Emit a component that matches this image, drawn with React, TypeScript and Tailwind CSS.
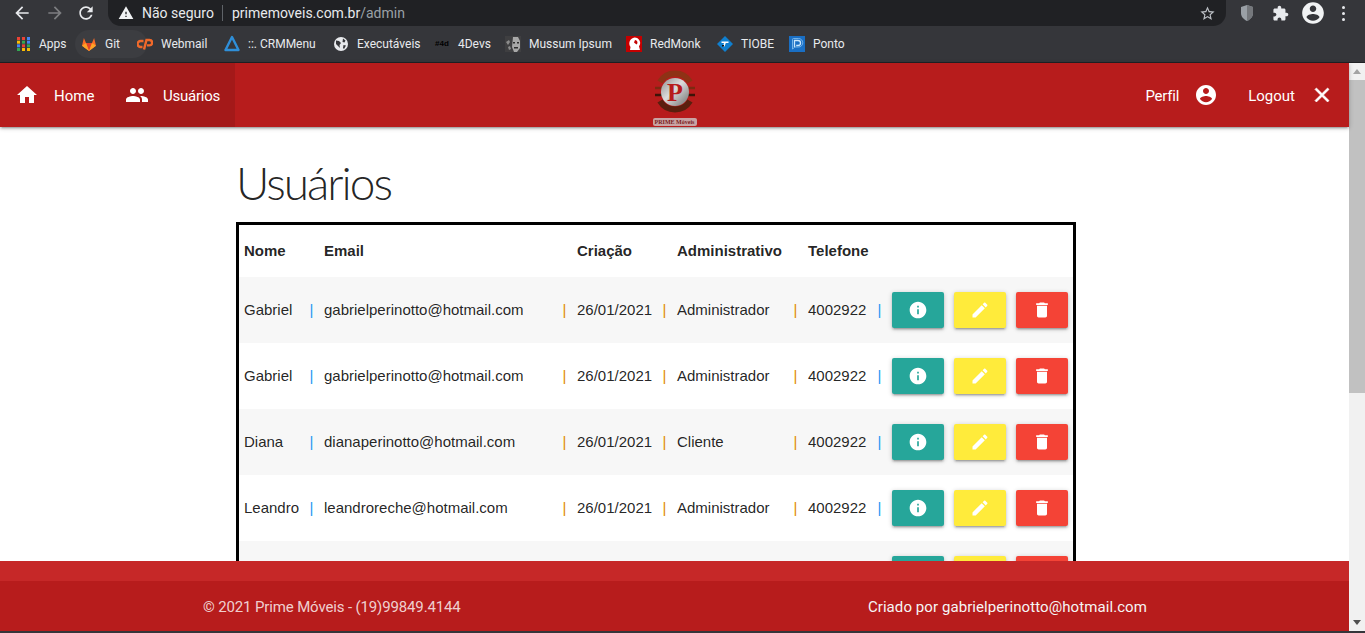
import { ReactNode } from "react";

const users = [
  { name: "Gabriel", email: "gabrielperinotto@hotmail.com", role: "Administrador" },
  { name: "Gabriel", email: "gabrielperinotto@hotmail.com", role: "Administrador" },
  { name: "Diana", email: "dianaperinotto@hotmail.com", role: "Cliente" },
  { name: "Leandro", email: "leandroreche@hotmail.com", role: "Administrador" },
];

function Mi({ d, size = 24, className = "" }: { d: string; size?: number; className?: string }) {
  return (
    <svg width={size} height={size} viewBox="0 0 24 24" fill="currentColor" className={className}>
      <path d={d} />
    </svg>
  );
}

const icons = {
  home: "M10 20v-6h4v6h5v-8h3L12 3 2 12h3v8z",
  people:
    "M16 11c1.66 0 2.99-1.34 2.99-3S17.66 5 16 5c-1.66 0-3 1.34-3 3s1.34 3 3 3zm-8 0c1.66 0 2.99-1.34 2.99-3S9.66 5 8 5C6.34 5 5 6.34 5 8s1.34 3 3 3zm0 2c-2.33 0-7 1.17-7 3.5V19h14v-2.5c0-2.33-4.67-3.5-7-3.5zm8 0c-.29 0-.62.02-.97.05 1.16.84 1.97 1.97 1.97 3.45V19h6v-2.5c0-2.33-4.67-3.5-7-3.5z",
  account:
    "M12 2C6.48 2 2 6.48 2 12s4.48 10 10 10 10-4.48 10-10S17.52 2 12 2zm0 3c1.66 0 3 1.34 3 3s-1.34 3-3 3-3-1.34-3-3 1.34-3 3-3zm0 14.2c-2.5 0-4.71-1.28-6-3.22.03-1.99 4-3.08 6-3.08 1.99 0 5.97 1.09 6 3.08-1.29 1.94-3.5 3.22-6 3.22z",
  close: "M19 6.41L17.59 5 12 10.59 6.41 5 5 6.41 10.59 12 5 17.59 6.41 19 12 13.41 17.59 19 19 17.59 13.41 12z",
  info: "M12 2C6.48 2 2 6.48 2 12s4.48 10 10 10 10-4.48 10-10S17.52 2 12 2zm1 15h-2v-6h2v6zm0-8h-2V7h2v2z",
  edit: "M3 17.25V21h3.75L17.81 9.94l-3.75-3.75L3 17.25zM20.71 7.04c.39-.39.39-1.02 0-1.41l-2.34-2.34c-.39-.39-1.02-.39-1.41 0l-1.83 1.83 3.75 3.75 1.83-1.83z",
  trash: "M6 19c0 1.1.9 2 2 2h8c1.1 0 2-.9 2-2V7H6v12zM19 4h-3.5l-1-1h-5l-1 1H5v2h14V4z",
  puzzle:
    "M20.5 11H19V7c0-1.1-.9-2-2-2h-4V3.5C13 2.12 11.88 1 10.5 1S8 2.12 8 3.5V5H4c-1.1 0-1.99.9-1.99 2v3.8H3.5c1.49 0 2.7 1.21 2.7 2.7s-1.21 2.7-2.7 2.7H2V20c0 1.1.9 2 2 2h3.8v-1.5c0-1.49 1.21-2.7 2.7-2.7 1.49 0 2.7 1.21 2.7 2.7V22H17c1.1 0 2-.9 2-2v-4h1.5c1.38 0 2.5-1.12 2.5-2.5S21.88 11 20.5 11z",
  back: "M20 11H7.83l5.59-5.59L12 4l-8 8 8 8 1.41-1.41L7.83 13H20v-2z",
  forward: "M12 4l-1.41 1.41L16.17 11H4v2h12.17l-5.58 5.59L12 20l8-8z",
  reload:
    "M17.65 6.35C16.2 4.9 14.21 4 12 4c-4.42 0-7.99 3.58-7.99 8s3.57 8 7.99 8c3.73 0 6.84-2.55 7.73-6h-2.08c-.82 2.33-3.04 4-5.65 4-3.31 0-6-2.69-6-6s2.69-6 6-6c1.66 0 3.14.69 4.22 1.78L13 11h7V4l-2.35 2.35z",
  warning: "M1 21h22L12 2 1 21zm12-3h-2v-2h2v2zm0-4h-2v-4h2v4z",
  star: "M22 9.24l-7.19-.62L12 2 9.19 8.63 2 9.24l5.46 4.73L5.82 21 12 17.27 18.18 21l-1.63-7.03L22 9.24zM12 15.4l-3.76 2.27 1-4.28-3.32-2.88 4.38-.38L12 6.1l1.71 4.04 4.38.38-3.32 2.88 1 4.28L12 15.4z",
};

function AppsIcon() {
  const colors = ["#ea4335", "#ea4335", "#4285f4", "#fbbc05", "#34a853", "#4285f4", "#4285f4", "#ea4335", "#34a853", "#34a853", "#fbbc05", "#fbbc05"];
  return (
    <svg width="13" height="14" viewBox="0 0 13 14">
      {colors.map((c, i) => (
        <rect key={i} x={(i % 3) * 5} y={Math.floor(i / 3) * 3.67} width="3" height="3" fill={c} />
      ))}
    </svg>
  );
}

const bookmarks: { label: string; w: string; hover?: boolean; icon: ReactNode }[] = [
  { label: "Apps", w: "w-[66px]", icon: <AppsIcon /> },
  {
    label: "Git",
    w: "w-[56px]",
    hover: true,
    icon: (
      <svg width="16" height="16" viewBox="0 0 16 16">
        <path d="M8 15L1 9.8 2.9 2 5 7h6l2.1-5L15 9.8z" fill="#fc6d26" />
        <path d="M8 15L5 7h6z" fill="#e24329" />
        <path d="M8 15L1 9.8 5 7zM8 15l7-5.2L11 7z" fill="#fca326" />
      </svg>
    ),
  },
  {
    label: "Webmail",
    w: "w-[87px]",
    icon: (
      <svg width="16" height="16" viewBox="0 0 16 16" fill="none" stroke="#f0692a" strokeWidth="2.4">
        <path d="M6.5 5H3.6a3 3 0 0 0 0 6H5.5" />
        <path d="M7 13.5L9.5 4H12.4a2.6 2.6 0 0 1 0 5.4H10" />
      </svg>
    ),
  },
  {
    label: "::. CRMMenu",
    w: "w-[109px]",
    icon: (
      <svg width="16" height="18" viewBox="0 0 16 18" fill="none">
        <path d="M8 2L14.5 15H1.500z" stroke="#2f8fd8" strokeWidth="2.4" strokeLinejoin="round" />
      </svg>
    ),
  },
  {
    label: "Executáveis",
    w: "w-[101px]",
    icon: (
      <svg width="16" height="16" viewBox="0 0 16 16">
        <circle cx="8" cy="8" r="7" fill="#e8eaed" />
        <path d="M3 4.5l3 .5 2 2-1.5 2 .5 3L5 10 3 8zM10 2.500l2.500 2-1 2-2-.5zM10.500 9l2.500.5-2 3.500-1-1z" fill="#35363a" />
      </svg>
    ),
  },
  {
    label: "4Devs",
    w: "w-[71px]",
    icon: <span className="w-4 text-[8px] font-bold text-black text-center font-['Liberation_Sans',sans-serif]">#4d</span>,
  },
  {
    label: "Mussum Ipsum",
    w: "w-[121px]",
    icon: (
      <svg width="16" height="16" viewBox="0 0 16 16">
        <rect width="16" height="16" fill="#3f3f41" />
        <path d="M8 1h5l2 4v7l-3 4H9l-2-5z" fill="#a8a8a8" />
        <path d="M1 6l3-2 1 2-2 3zM3 11l2-1 1 3-2 1z" fill="#8c8c8c" />
        <path d="M8 6h2v1.500H8zM12 6h2v1.500h-2zM9 11h4v1.500H9z" fill="#2e2e2e" />
      </svg>
    ),
  },
  {
    label: "RedMonk",
    w: "w-[91px]",
    icon: (
      <svg width="16" height="16" viewBox="0 0 16 16">
        <rect width="16" height="16" fill="#c40000" />
        <path d="M8.500 1.500a5.500 5.500 0 0 1 4.500 8.800L14 14H4l.5-3a6 6 0 0 1 4-9.500z" fill="#fff" />
        <path d="M9 4a2.500 2.500 0 0 1 1.500 4.500L8 6.500z" fill="#c40000" />
      </svg>
    ),
  },
  {
    label: "TIOBE",
    w: "w-[72px]",
    icon: (
      <svg width="16" height="16" viewBox="0 0 16 16">
        <path d="M8 0l8 8-8 8-8-8z" fill="#0f7fcf" />
        <path d="M4.500 5.500h7v1.400H8.800L7.500 10.500H6l1-3.600H4.500z" fill="#fff" />
        <path d="M5 9h2v1.400H5z" fill="#111" />
      </svg>
    ),
  },
  {
    label: "Ponto",
    w: "w-[70px]",
    icon: (
      <svg width="16" height="16" viewBox="0 0 16 16" fill="none">
        <rect width="16" height="16" fill="#1a6fc4" />
        <path d="M5.500 11V4.500h3.500a2.500 2.500 0 0 1 0 5H7.200" stroke="#cbe6fb" strokeWidth="1.300" />
        <path d="M3.500 13V3.500a1 1 0 0 1 1-1h5a4 4 0 0 1 0 8.500H6z" stroke="#8cc4f0" strokeWidth=".8" />
      </svg>
    ),
  },
];

function ChromeBars() {
  return (
    <div className="bg-[#35363a] text-[#e8eaed] font-['Roboto',sans-serif] border-b border-[#202124]">
      <div className="h-[26px] flex items-center">
        <div className="w-[108px] flex items-center text-[#e8eaed]">
          <Mi d={icons.back} size={20} className="ml-[12px]" />
          <Mi d={icons.forward} size={20} className="ml-[13px] text-[#7d7e81]" />
          <Mi d={icons.reload} size={20} className="ml-[11px]" />
        </div>
        <div className="w-[1118px] h-[26px] bg-[#202124] rounded-b-[13px] flex items-center text-[14px]">
          <Mi d={icons.warning} size={16} className="ml-[10px] text-[#f1f3f4]" />
          <span className="ml-[8px] w-[80px]">Não seguro</span>
          <span className="w-px h-4 bg-[#5f6368]" />
          <span className="ml-[9px]">primemoveis.com.br</span>
          <span className="text-[#9aa0a6]">/admin</span>
          <Mi d={icons.star} size={17} className="ml-auto mr-[10px] text-[#bdc1c6]" />
        </div>
        <svg width="14" height="16" viewBox="0 0 14 16" className="ml-[14px]">
          <path d="M7 0l6 2v6c0 4-3 6.500-6 8-3-1.500-6-4-6-8V2z" fill="#9aa0a6" />
          <path d="M7 0l6 2v6c0 4-3 6.500-6 8z" fill="#75787c" />
        </svg>
        <Mi d={icons.puzzle} size={17} className="ml-[18px]" />
        <Mi d={icons.account} size={26} className="ml-[11px] text-[#f1f3f4]" />
        <div className="ml-[16px] flex flex-col gap-[3px]">
          <span className="w-[3px] h-[3px] rounded-full bg-[#e8eaed]" />
          <span className="w-[3px] h-[3px] rounded-full bg-[#e8eaed]" />
          <span className="w-[3px] h-[3px] rounded-full bg-[#e8eaed]" />
        </div>
      </div>
      <div className="h-[36px] flex items-center pl-[15px] text-[12px]">
        {bookmarks.map((b) => (
          <div key={b.label} className={`${b.w} relative flex items-center gap-[8px] h-[28px] shrink-0`}>
            {b.hover && <span className="absolute -left-[6px] -right-[10px] top-0 bottom-0 rounded-full bg-[#3c3d41]" />}
            <span className="relative w-4 flex items-center justify-center">{b.icon}</span>
            <span className="relative whitespace-nowrap">{b.label}</span>
          </div>
        ))}
      </div>
    </div>
  );
}

function Logo() {
  return (
    <div className="flex flex-col items-center gap-[4px] pt-[4px]">
      <svg width="48" height="46" viewBox="0 0 48 46">
        <defs>
          <linearGradient id="steel" x1="0" y1="0" x2="1" y2="1">
            <stop offset="0" stopColor="#8f8f8f" />
            <stop offset="0.45" stopColor="#dcdcdc" />
            <stop offset="1" stopColor="#6f6f6f" />
          </linearGradient>
        </defs>
        <path d="M9 14A17.500 17.500 0 0 1 39 14" fill="none" stroke="#8e3215" strokeWidth="6" />
        <path d="M9 33A17.500 17.500 0 0 0 39 33" fill="none" stroke="#5a1f0e" strokeWidth="6" />
        <path d="M4 20h8M36 20h8" stroke="#7c2a10" strokeWidth="2.500" />
        <path d="M4 27h8M36 27h8" stroke="#3c1408" strokeWidth="2.500" />
        <circle cx="24" cy="24" r="14" fill="url(#steel)" />
        <text x="24" y="33" textAnchor="middle" fontSize="26" fontWeight="700" fill="#b71c1c" fontFamily="Liberation Serif, serif">
          P
        </text>
      </svg>
      <span className="bg-[#c8a3a3] text-[#7a1c1c] rounded-[2px] text-[6px] leading-[8px] font-bold whitespace-nowrap font-['Liberation_Serif',serif] w-[44px] text-center">
        PRIME Móveis
      </span>
    </div>
  );
}

function NavBar() {
  return (
    <nav className="relative z-10 h-[64px] bg-[#b71c1c] text-white text-[15px] flex items-center justify-between shadow-[0_2px_2px_0_rgba(0,0,0,0.14),0_3px_1px_-2px_rgba(0,0,0,0.12),0_1px_5px_0_rgba(0,0,0,0.2)]">
      <div className="flex w-[440px] h-full">
        <a className="flex items-center gap-[15px] pl-[15px] w-[110px] h-full">
          <Mi d={icons.home} />
          <span className="pt-[2px]">Home</span>
        </a>
        <a className="flex items-center gap-[14px] pl-[15px] w-[125px] h-full bg-[rgba(0,0,0,0.1)]">
          <Mi d={icons.people} />
          <span className="pt-[2px] tracking-[-0.25px]">Usuários</span>
        </a>
      </div>
      <Logo />
      <div className="flex justify-end w-[440px] h-full">
        <a className="flex items-center gap-[15px] px-[15px] h-full">
          <span className="pt-[2px] tracking-[-0.2px]">Perfil</span>
          <Mi d={icons.account} />
        </a>
        <a className="flex items-center gap-[15px] px-[15px] h-full">
          <span className="pt-[2px]">Logout</span>
          <Mi d={icons.close} className="stroke-current stroke-[0.7]" />
        </a>
      </div>
    </nav>
  );
}

const gridCols = "grid grid-cols-[80px_253px_100px_131px_84px_1fr] items-center";

function Cell({ children, bar }: { children: ReactNode; bar: string }) {
  return (
    <div className="flex items-center justify-between pl-[5px] pr-[6px]">
      <span className="whitespace-nowrap">{children}</span>
      <span className={`${bar} w-[4px] pl-[0.5px]`}>|</span>
    </div>
  );
}

function ActionButton({ color, d }: { color: string; d: string }) {
  return (
    <button className={`${color} w-[52px] h-[36px] rounded-[2px] text-white flex items-center justify-center shadow-[0_2px_2px_0_rgba(0,0,0,0.14),0_3px_1px_-2px_rgba(0,0,0,0.12),0_1px_5px_0_rgba(0,0,0,0.2)]`}>
      <Mi d={d} size={20} />
    </button>
  );
}

function Actions() {
  return (
    <div className="flex gap-[10px] px-[5px]">
      <ActionButton color="bg-[#26a69a]" d={icons.info} />
      <ActionButton color="bg-[#ffeb3b]" d={icons.edit} />
      <ActionButton color="bg-[#f44336]" d={icons.trash} />
    </div>
  );
}

function UsersTable() {
  return (
    <div className="w-[840px] border-[3px] border-black text-[15px] text-[rgba(0,0,0,0.87)] font-['Liberation_Sans',sans-serif]">
      <div className={`${gridCols} h-[52px] font-bold`}>
        {["Nome", "Email", "Criação", "Administrativo", "Telefone"].map((h) => (
          <div key={h} className="pl-[5px]">
            {h}
          </div>
        ))}
      </div>
      {users.map((u, i) => (
        <div key={i} className={`${gridCols} h-[66px] ${i % 2 === 0 ? "bg-[#f7f7f7]" : "bg-white"}`}>
          <Cell bar="text-[#2196f3]">{u.name}</Cell>
          <Cell bar="text-[#e08a00]">{u.email}</Cell>
          <Cell bar="text-[#e08a00]">26/01/2021</Cell>
          <Cell bar="text-[#e08a00]">{u.role}</Cell>
          <Cell bar="text-[#2196f3]">4002922</Cell>
          <Actions />
        </div>
      ))}
      {/* next row is mostly behind the footer, only the buttons peek out */}
      <div className="flex justify-end items-center h-[66px] bg-[#f7f7f7]">
        <Actions />
      </div>
    </div>
  );
}

function Footer() {
  return (
    <footer className="relative z-10 shrink-0 text-[15px]">
      <div className="h-[20px] bg-[#c62828]" />
      <div className="h-[50px] bg-[#b71c1c] flex items-center justify-between pl-[203px] pr-[202px] pt-[2px]">
        <span className="text-[rgba(255,255,255,0.8)] tracking-[-0.14px]">© 2021 Prime Móveis - (19)99849.4144</span>
        <span className="text-[#f5f5f5] tracking-[0.08px]">Criado por gabrielperinotto@hotmail.com</span>
      </div>
    </footer>
  );
}

function Scrollbar() {
  return (
    <div className="w-[16px] shrink-0 bg-[#f1f1f1] flex flex-col items-center">
      <span className="h-[17px] flex items-center justify-center">
        <span className="w-0 h-0 border-x-[4px] border-x-transparent border-b-[5px] border-b-[#a3a3a3]" />
      </span>
      <div className="w-full h-[313px] bg-[#c1c1c1]" />
      <span className="mt-auto h-[17px] flex items-center justify-center">
        <span className="w-0 h-0 border-x-[4px] border-x-transparent border-t-[5px] border-t-[#505050]" />
      </span>
    </div>
  );
}

export default function App() {
  return (
    <div className="w-[1365px] h-[633px] overflow-hidden flex flex-col bg-white font-['Roboto',sans-serif]">
      <ChromeBars />
      <div className="flex-1 min-h-0 flex">
        <div className="flex-1 min-w-0 flex flex-col">
          <NavBar />
          <main className="flex-1 min-h-0 overflow-hidden pl-[236px] pt-[28px]">
            <h1 className="text-[46px] leading-[56px] font-light tracking-[-2px] text-[rgba(0,0,0,0.87)] mb-[11px] font-['Lato',sans-serif]">Usuários</h1>
            <UsersTable />
          </main>
          <Footer />
        </div>
        <Scrollbar />
      </div>
      <div className="h-[2px] shrink-0 bg-[#35363a]" />
    </div>
  );
}
